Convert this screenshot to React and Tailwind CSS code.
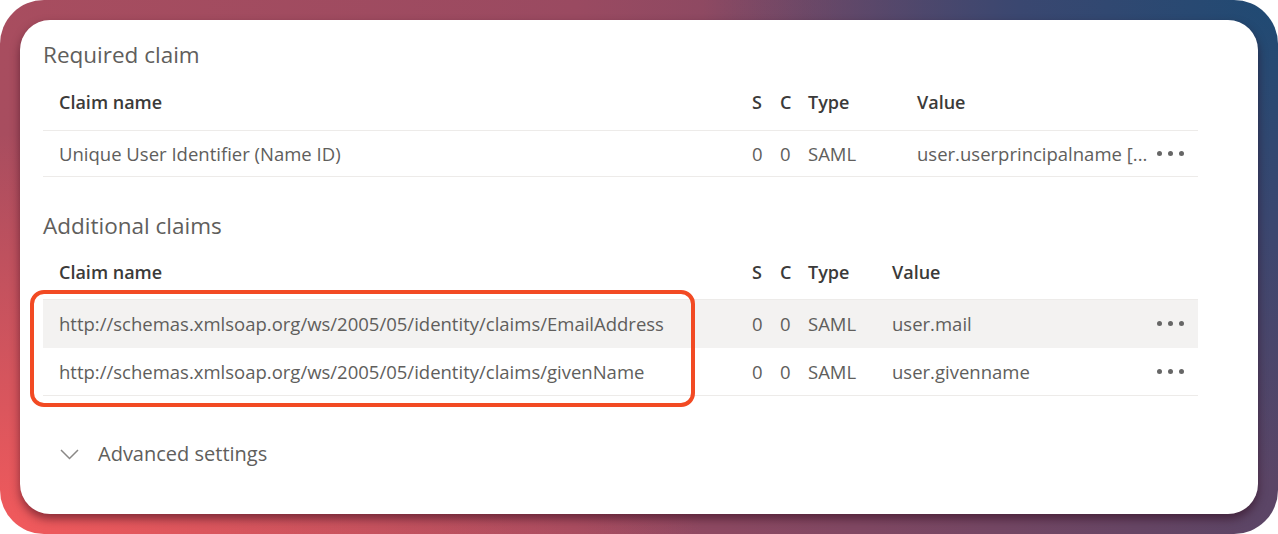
import React from 'react';

const font = { fontFamily: '"Open Sans", "Noto Sans", sans-serif' };

const requiredRows = [
  { name: 'Unique User Identifier (Name ID)', s: '0', c: '0', type: 'SAML', value: 'user.userprincipalname [...' },
];

const additionalRows = [
  { name: 'http://schemas.xmlsoap.org/ws/2005/05/identity/claims/EmailAddress', s: '0', c: '0', type: 'SAML', value: 'user.mail', hover: true },
  { name: 'http://schemas.xmlsoap.org/ws/2005/05/identity/claims/givenName', s: '0', c: '0', type: 'SAML', value: 'user.givenname' },
];

const Dots = () => (
  <div className="flex items-center gap-[6px]">
    <span className="w-[5px] h-[5px] rounded-full bg-[#666]" />
    <span className="w-[5px] h-[5px] rounded-full bg-[#666]" />
    <span className="w-[5px] h-[5px] rounded-full bg-[#666]" />
  </div>
);

const ClaimTable = ({ rows, cols, headH, rowH, outlined }) => (
  <div>
    <div className={`grid ${cols} ${headH} items-center pl-4 pr-[14px] border-b border-[#edebe9] text-[18px] font-semibold text-[#3b3a39]`}>
      <span>Claim name</span>
      <span>S</span>
      <span>C</span>
      <span>Type</span>
      <span>Value</span>
      <span />
    </div>
    <div className="relative">
      {rows.map((r) => (
        <div
          key={r.name}
          className={`grid ${cols} ${rowH} items-center pl-4 pr-[14px] border-b border-[#edebe9] text-[18.5px] text-[#605e5c] ${r.hover ? 'bg-[#f3f2f1] border-transparent' : ''}`}
        >
          <span className="whitespace-nowrap">{r.name}</span>
          <span>{r.s}</span>
          <span>{r.c}</span>
          <span>{r.type}</span>
          <span className="whitespace-nowrap">{r.value}</span>
          <Dots />
        </div>
      ))}
      {outlined && (
        <div className="absolute left-[-13px] top-[-10px] w-[665px] h-[117px] border-[4px] border-[#f24a23] rounded-[14px]" />
      )}
    </div>
  </div>
);

export default function App() {
  return (
    <div className="w-[1278px] h-[534px] bg-white" style={font}>
      <div className="w-full h-full rounded-[44px] p-[20px] bg-[radial-gradient(ellipse_55%_75%_at_0%_100%,#f25a5c_0%,rgba(242,90,92,0)_100%),radial-gradient(ellipse_45%_90%_at_100%_0%,#1f4a73_0%,#3a4770_45%,rgba(80,70,105,0)_100%),linear-gradient(90deg,#a84d5f_0%,#9a4a61_45%,#5a4566_100%)]">
        <div className="w-full h-full bg-white rounded-[30px] shadow-[0_5px_10px_rgba(40,0,20,0.5)] pl-[23px] pr-[60px] pt-[19px]">
          <h2 className="text-[22.5px] leading-[32px] text-[#605e5c]">Required claim</h2>
          <div className="mt-[4px]">
            <ClaimTable rows={requiredRows} cols="grid-cols-[693px_28px_28px_109px_1fr_27px]" headH="h-[56px]" rowH="h-[46px]" />
          </div>

          <h2 className="mt-[33px] text-[22.5px] leading-[32px] text-[#605e5c]">Additional claims</h2>
          <div className="mt-[3px]">
            <ClaimTable rows={additionalRows} cols="grid-cols-[693px_28px_28px_84px_1fr_27px]" headH="h-[55px]" rowH="h-[48px]" outlined />
          </div>

          <div className="mt-[44px] flex items-center pl-[17px] text-[20px] leading-[28px] text-[#605e5c]">
            <svg width="19" height="11" viewBox="0 0 19 11" fill="none" className="mr-[19px]">
              <polyline points="1,1 9.5,9.5 18,1" stroke="#8a8886" strokeWidth="1.5" />
            </svg>
            <span>Advanced settings</span>
          </div>
        </div>
      </div>
    </div>
  );
}
